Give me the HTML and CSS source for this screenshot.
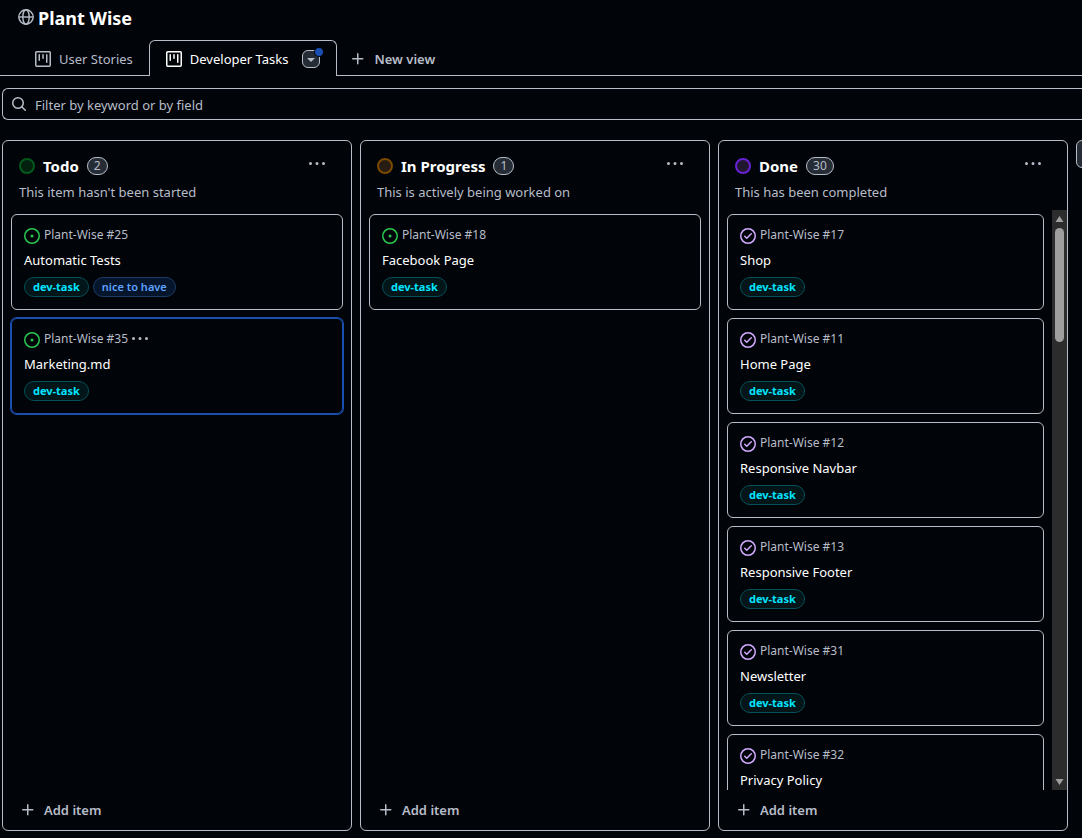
FILE: index.html
```html
<!DOCTYPE html>
<html lang="en">
<head>
    <meta charset="UTF-8">
    <meta name="viewport" content="width=device-width, initial-scale=1.0">
    <title>Plant Wise</title>
    <link rel="stylesheet" href="styles.css">
</head>
<body>
    <!-- icon set -->
    <svg class="sprite" aria-hidden="true">
        <symbol id="i-globe" viewBox="0 0 16 16">
            <g fill="none" stroke="currentColor" stroke-width="1.4"><circle cx="8" cy="8" r="7.2"/><ellipse cx="8" cy="8" rx="3.2" ry="7.2"/><path d="M.8 8h14.400"/></g>
        </symbol>
        <symbol id="i-project" viewBox="0 0 16 16">
            <path d="M1.75 0h12.5C15.216 0 16 .784 16 1.75v12.5A1.75 1.75 0 0 1 14.25 16H1.75A1.75 1.75 0 0 1 0 14.25V1.75C0 .784.784 0 1.75 0ZM1.5 1.75v12.5c0 .138.112.25.25.25h12.5a.25.25 0 0 0 .25-.25V1.75a.25.25 0 0 0-.25-.25H1.75a.25.25 0 0 0-.25.25ZM11.75 3a.75.75 0 0 1 .75.75v7.5a.75.75 0 0 1-1.5 0v-7.5a.75.75 0 0 1 .75-.75Zm-8.25.75a.75.75 0 0 1 1.5 0v5.5a.75.75 0 0 1-1.5 0ZM8 3a.75.75 0 0 1 .75.75v3.5a.75.75 0 0 1-1.5 0v-3.5A.75.75 0 0 1 8 3Z"/>
        </symbol>
        <symbol id="i-down" viewBox="0 0 16 16">
            <path d="m4.427 7.427 3.396 3.396a.25.25 0 0 0 .354 0l3.396-3.396A.25.25 0 0 0 11.396 7H4.604a.25.25 0 0 0-.177.427Z"/>
        </symbol>
        <symbol id="i-plus" viewBox="0 0 16 16">
            <path d="M7.75 2a.75.75 0 0 1 .75.75V7h4.25a.75.75 0 0 1 0 1.5H8.5v4.25a.75.75 0 0 1-1.5 0V8.5H2.75a.75.75 0 0 1 0-1.5H7V2.75A.75.75 0 0 1 7.75 2Z"/>
        </symbol>
        <symbol id="i-search" viewBox="0 0 16 16">
            <path d="M10.68 11.74a6 6 0 0 1-7.922-8.982 6 6 0 0 1 8.982 7.922l3.04 3.04a.749.749 0 0 1-.326 1.275.749.749 0 0 1-.734-.215ZM11.5 7a4.499 4.499 0 1 0-8.997 0A4.499 4.499 0 0 0 11.5 7Z"/>
        </symbol>
        <symbol id="i-dots" viewBox="0 0 16 16">
            <path d="M8 9a1.5 1.5 0 1 0 0-3 1.5 1.5 0 0 0 0 3ZM1.5 9a1.5 1.5 0 1 0 0-3 1.5 1.5 0 0 0 0 3Zm13 0a1.5 1.5 0 1 0 0-3 1.5 1.5 0 0 0 0 3Z"/>
        </symbol>
        <symbol id="i-open" viewBox="0 0 16 16">
            <path d="M8 9.5a1.5 1.5 0 1 0 0-3 1.5 1.5 0 0 0 0 3Z"/>
            <path d="M8 0a8 8 0 1 1 0 16A8 8 0 0 1 8 0ZM1.5 8a6.5 6.5 0 1 0 13 0 6.5 6.5 0 0 0-13 0Z"/>
        </symbol>
        <symbol id="i-done" viewBox="0 0 16 16">
            <path d="M0 8a8 8 0 1 1 16 0A8 8 0 0 1 0 8Zm1.5 0a6.5 6.5 0 1 0 13 0 6.5 6.5 0 0 0-13 0Zm10.28-1.72-4.5 4.5a.75.75 0 0 1-1.06 0l-2-2a.751.751 0 0 1 .018-1.042.751.751 0 0 1 1.042-.018l1.47 1.47 3.97-3.97a.751.751 0 0 1 1.042.018.751.751 0 0 1 .018 1.042Z"/>
        </symbol>
    </svg>

    <header class="project-header">
        <svg class="icon"><use href="#i-globe"/></svg>
        <h1>Plant Wise</h1>
    </header>

    <nav class="tabs">
        <a class="tab" href="#stories"><svg class="icon"><use href="#i-project"/></svg>User Stories</a>
        <div class="tab active">
            <a href="#tasks"><svg class="icon"><use href="#i-project"/></svg>Developer Tasks</a>
            <button type="button" class="tab-menu" aria-label="View options"><svg class="icon"><use href="#i-down"/></svg></button>
        </div>
        <button type="button" class="new-view"><svg class="icon"><use href="#i-plus"/></svg>New view</button>
    </nav>

    <form class="filter">
        <label for="filter" aria-label="Filter"><svg class="icon"><use href="#i-search"/></svg></label>
        <input type="text" id="filter" placeholder="Filter by keyword or by field">
    </form>

    <main class="board">
        <section class="column">
            <header class="column-header">
                <span class="dot green"></span>
                <h2>Todo</h2>
                <span class="count">2</span>
                <button type="button" class="more" aria-label="Todo actions"><svg class="icon"><use href="#i-dots"/></svg></button>
            </header>
            <p class="description">This item hasn't been started</p>
            <div class="column-body">
                <div class="cards">
                    <article class="card">
                        <div class="issue"><svg class="icon open"><use href="#i-open"/></svg><span>Plant-Wise #25</span></div>
                        <a class="title" href="#25">Automatic Tests</a>
                        <div class="labels"><span class="label">dev-task</span><span class="label blue">nice to have</span></div>
                    </article>
                    <article class="card selected">
                        <div class="issue"><svg class="icon open"><use href="#i-open"/></svg><span>Plant-Wise #35</span><button type="button" aria-label="Card actions"><svg class="icon"><use href="#i-dots"/></svg></button></div>
                        <a class="title" href="#35">Marketing.md</a>
                        <div class="labels"><span class="label">dev-task</span></div>
                    </article>
                </div>
            </div>
            <button type="button" class="add-item"><svg class="icon"><use href="#i-plus"/></svg>Add item</button>
        </section>

        <section class="column">
            <header class="column-header">
                <span class="dot orange"></span>
                <h2>In Progress</h2>
                <span class="count">1</span>
                <button type="button" class="more" aria-label="In Progress actions"><svg class="icon"><use href="#i-dots"/></svg></button>
            </header>
            <p class="description">This is actively being worked on</p>
            <div class="column-body">
                <div class="cards">
                    <article class="card">
                        <div class="issue"><svg class="icon open"><use href="#i-open"/></svg><span>Plant-Wise #18</span></div>
                        <a class="title" href="#18">Facebook Page</a>
                        <div class="labels"><span class="label">dev-task</span></div>
                    </article>
                </div>
            </div>
            <button type="button" class="add-item"><svg class="icon"><use href="#i-plus"/></svg>Add item</button>
        </section>

        <section class="column">
            <header class="column-header">
                <span class="dot purple"></span>
                <h2>Done</h2>
                <span class="count">30</span>
                <button type="button" class="more" aria-label="Done actions"><svg class="icon"><use href="#i-dots"/></svg></button>
            </header>
            <p class="description">This has been completed</p>
            <div class="column-body">
                <div class="cards">
                    <article class="card">
                        <div class="issue"><svg class="icon done"><use href="#i-done"/></svg><span>Plant-Wise #17</span></div>
                        <a class="title" href="#17">Shop</a>
                        <div class="labels"><span class="label">dev-task</span></div>
                    </article>
                    <article class="card">
                        <div class="issue"><svg class="icon done"><use href="#i-done"/></svg><span>Plant-Wise #11</span></div>
                        <a class="title" href="#11">Home Page</a>
                        <div class="labels"><span class="label">dev-task</span></div>
                    </article>
                    <article class="card">
                        <div class="issue"><svg class="icon done"><use href="#i-done"/></svg><span>Plant-Wise #12</span></div>
                        <a class="title" href="#12">Responsive Navbar</a>
                        <div class="labels"><span class="label">dev-task</span></div>
                    </article>
                    <article class="card">
                        <div class="issue"><svg class="icon done"><use href="#i-done"/></svg><span>Plant-Wise #13</span></div>
                        <a class="title" href="#13">Responsive Footer</a>
                        <div class="labels"><span class="label">dev-task</span></div>
                    </article>
                    <article class="card">
                        <div class="issue"><svg class="icon done"><use href="#i-done"/></svg><span>Plant-Wise #31</span></div>
                        <a class="title" href="#31">Newsletter</a>
                        <div class="labels"><span class="label">dev-task</span></div>
                    </article>
                    <article class="card">
                        <div class="issue"><svg class="icon done"><use href="#i-done"/></svg><span>Plant-Wise #32</span></div>
                        <a class="title" href="#32">Privacy Policy</a>
                    </article>
                </div>
                <div class="scrollbar">
                    <svg viewBox="0 0 9 7"><path d="M4.500 0.500L8.500 6.500H0.500Z"/></svg>
                    <div class="track"><div class="thumb"></div></div>
                    <svg viewBox="0 0 9 7"><path d="M4.500 6.500L8.500 0.500H0.500Z"/></svg>
                </div>
            </div>
            <button type="button" class="add-item"><svg class="icon"><use href="#i-plus"/></svg>Add item</button>
        </section>

        <button type="button" class="add-column" aria-label="Add column"></button>
    </main>
</body>
</html>
```
FILE: styles.css
```css
* {
    box-sizing: border-box;
}
body {
    margin: 0;
    height: 100vh;
    display: flex;
    flex-direction: column;
    overflow: hidden;
    background-color: #010409;
    color: #b7bdc8;
    font-family: "Noto Sans", sans-serif;
    font-size: 13px;
    line-height: 20px;
}
h1, h2, p {
    margin: 0;
}
h1, h2 {
    color: #fff;
    font-weight: 700;
}
a {
    color: inherit;
    text-decoration: none;
}
button {
    padding: 0;
    border: none;
    background: none;
    color: inherit;
    font: inherit;
    cursor: pointer;
}
.sprite {
    display: none;
}
.icon {
    width: 16px;
    height: 16px;
    flex: none;
    fill: currentColor;
}

/* header */
.project-header {
    display: flex;
    align-items: center;
    gap: 4px;
    height: 36px;
    padding-left: 18px;
}
.project-header .icon {
    margin-bottom: 2px;
}
h1 {
    font-size: 18px;
    line-height: 24px;
}

/* tabs */
.tabs {
    display: flex;
    height: 40px;
    padding: 4px 0 0 19px;
    box-shadow: inset 0 -1px #b7bdc8;
}
.tab, .tab a, .new-view {
    display: flex;
    align-items: center;
    gap: 8px;
}
.tab {
    padding: 2px 16px 0;
}
.tab.active {
    gap: 14px;
    padding: 0 16px;
    border: 1px solid #b7bdc8;
    border-bottom: none;
    border-radius: 6px 6px 0 0;
    background-color: #010409;
    color: #fff;
}
.tab-menu {
    position: relative;
    width: 18px;
    height: 18px;
    display: flex;
    align-items: center;
    justify-content: center;
    border: 1px solid #b7bdc8;
    border-radius: 6px;
    background-color: #262c36;
    color: #b7bdc8;
}
/* unsaved changes marker */
.tab-menu::after {
    content: "";
    position: absolute;
    top: -3px;
    right: -4px;
    width: 8px;
    height: 8px;
    border-radius: 50%;
    background-color: #194fb1;
    box-shadow: 0 0 0 1px #010409;
}
.new-view {
    padding: 2px 13px 0;
    font-weight: 600;
}

/* filter */
.filter {
    display: flex;
    align-items: center;
    gap: 8px;
    height: 32px;
    margin: 12px 0 20px 2px;
    padding-left: 8px;
    border: 1px solid #b7bdc8;
    border-right: none;
    border-radius: 6px 0 0 6px;
}
.filter label {
    display: flex;
}
.filter input {
    flex: 1;
    padding: 2px 0 0;
    border: none;
    outline: none;
    background: none;
    color: #fff;
    font: inherit;
}
.filter input::placeholder {
    color: #b7bdc8;
}

/* board */
.board {
    flex: 1;
    min-height: 0;
    display: flex;
    gap: 8px;
    padding: 0 0 7px 2px;
    overflow: hidden;
}
.column {
    flex: none;
    width: 350px;
    display: flex;
    flex-direction: column;
    border: 1px solid #b7bdc8;
    border-radius: 6px;
}
.column-header {
    display: flex;
    align-items: center;
    gap: 8px;
    height: 33px;
    margin-top: 8px;
    padding: 0 16px;
}
h2 {
    font-size: 15px;
    line-height: 24px;
}
.dot {
    width: 16px;
    height: 16px;
    border: 2px solid;
    border-radius: 50%;
}
.dot.green {
    border-color: #04591d;
    background-color: #03210f;
}
.dot.orange {
    border-color: #7b4900;
    background-color: #271c11;
}
.dot.purple {
    border-color: #6921d7;
    background-color: #211830;
}
.count {
    padding: 0 6px;
    border: 1px solid #b7bdc8;
    border-radius: 20px;
    background-color: #262c36;
    font-size: 12px;
    line-height: 16px;
}
.more {
    display: flex;
    margin: 0 10px 4px auto;
}
.description {
    margin-bottom: 8px;
    padding: 0 16px;
}
.column-body {
    flex: 1;
    min-height: 0;
    display: flex;
}
.cards {
    flex: 1;
    display: flex;
    flex-direction: column;
    gap: 8px;
    padding: 4px 8px 0;
    overflow: hidden;
}
.card {
    flex: none;
    height: 96px;
    padding: 10px 12px;
    border: 1px solid #b7bdc8;
    border-radius: 6px;
}
.card.selected {
    border-color: #194fb1;
    box-shadow: 0 0 0 1px #194fb1;
}
.issue {
    display: flex;
    align-items: center;
    gap: 4px;
    font-size: 12px;
}
.issue .icon {
    margin-top: 2px;
}
.issue button {
    display: flex;
}
.issue button .icon {
    margin: 0;
}
.open {
    color: #2bc84f;
}
.done {
    color: #d3abff;
}
.title {
    display: block;
    margin: 5px 0 7px;
    color: #fff;
}
.labels {
    display: flex;
    gap: 4px;
}
.label {
    padding: 0 8px;
    border: 1px solid #045059;
    border-radius: 20px;
    background-color: #021519;
    color: #00e4ff;
    font-size: 11px;
    font-weight: 700;
    line-height: 18px;
}
.label.blue {
    border-color: #1e3b66;
    background-color: #05152c;
    color: #5ea3ff;
    font-weight: 600;
}
.scrollbar {
    width: 15px;
    display: flex;
    flex-direction: column;
    align-items: center;
    gap: 5px;
    padding: 5px 0 4px;
    background-color: #2c2c2c;
}
.scrollbar svg {
    width: 9px;
    height: 8px;
    fill: #9f9f9f;
}
.track {
    flex: 1;
    width: 9px;
}
.thumb {
    height: 21%;
    border-radius: 5px;
    background-color: #9f9f9f;
}
.add-item {
    display: flex;
    align-items: center;
    gap: 8px;
    height: 40px;
    padding: 0 17px;
    font-weight: 600;
}
.add-column {
    flex: none;
    width: 28px;
    height: 28px;
    border: 1px solid #b7bdc8;
    border-radius: 6px;
    background-color: #262c36;
}
```
